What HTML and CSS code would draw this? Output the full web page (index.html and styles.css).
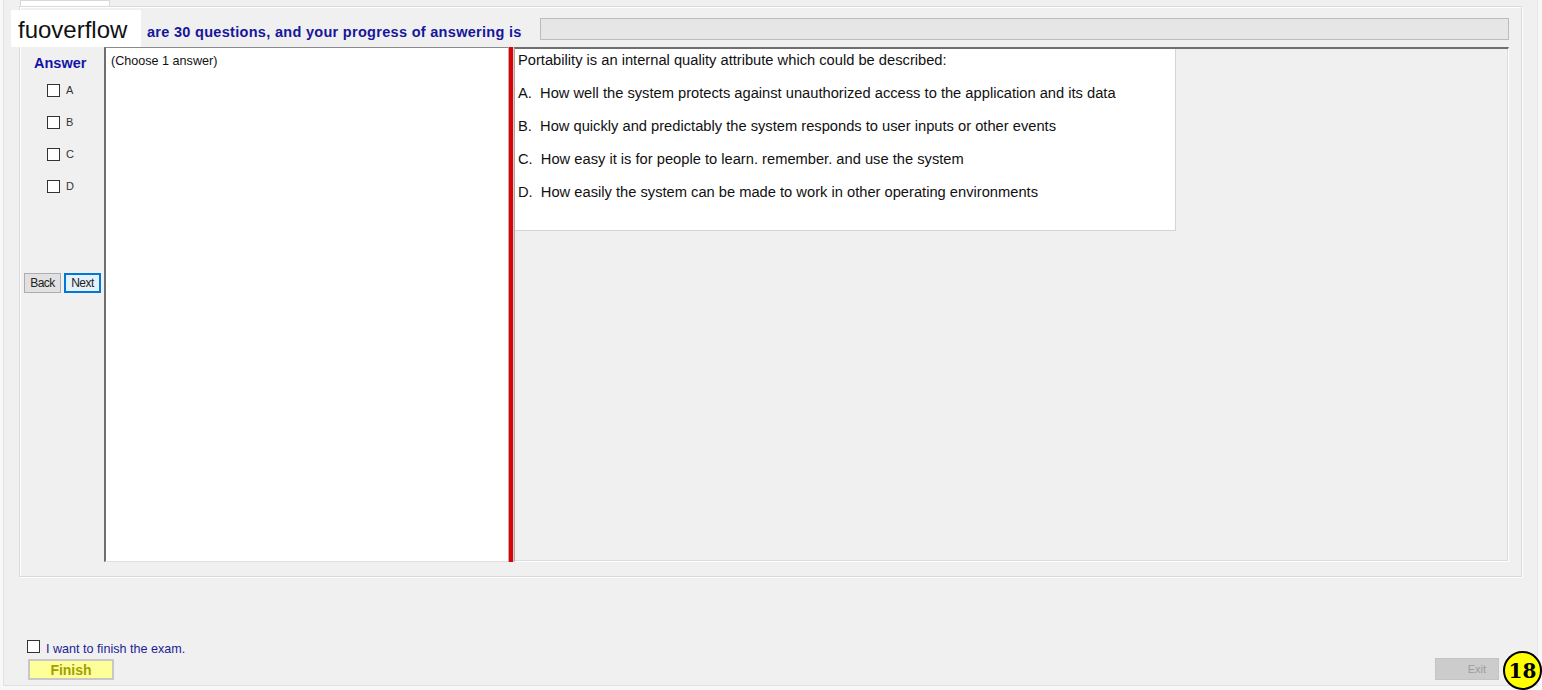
FILE: index.html
```html
<!DOCTYPE html>
<html>
<head>
<meta charset="utf-8">
<title>Exam</title>
<link rel="stylesheet" href="styles.css">
</head>
<body>
<div class="window">
  <div class="tabstrip"><div class="tab"></div></div>
  <div class="tabpage">
    <div class="header">
      <span class="progress-text">are 30 questions, and your progress of answering is</span>
      <div class="progress-bar"></div>
    </div>
    <div class="content">
      <div class="answers">
        <div class="answer-title">Answer</div>
        <div class="opts">
          <label class="opt"><span class="box"></span><span class="opt-label">A</span></label>
          <label class="opt"><span class="box"></span><span class="opt-label">B</span></label>
          <label class="opt"><span class="box"></span><span class="opt-label">C</span></label>
          <label class="opt"><span class="box"></span><span class="opt-label">D</span></label>
        </div>
        <div class="nav">
          <button class="btn">Back</button>
          <button class="btn btn-focus">Next</button>
        </div>
      </div>
      <div class="choices">(Choose 1 answer)</div>
      <div class="splitter"></div>
      <div class="question">
        <div class="qbox">
          <p class="qline">Portability is an internal quality attribute which could be described:</p>
          <p class="qline">A.&nbsp; How well the system protects against unauthorized access to the application and its data</p>
          <p class="qline">B.&nbsp; How quickly and predictably the system responds to user inputs or other events</p>
          <p class="qline">C.&nbsp; How easy it is for people to learn. remember. and use the system</p>
          <p class="qline">D.&nbsp; How easily the system can be made to work in other operating environments</p>
        </div>
      </div>
    </div>
  </div>
  <div class="footer">
    <div class="finish-col">
      <label class="finish-check"><span class="box"></span><span class="finish-label">I want to finish the exam.</span></label>
      <button class="finish-btn">Finish</button>
    </div>
    <button class="exit-btn">Exit</button>
  </div>
  <div class="watermark">fuoverflow</div>
  <div class="badge">18</div>
</div>
</body>
</html>
```

FILE: styles.css
```css
* { box-sizing: border-box; }
html, body { margin: 0; padding: 0; }
body {
  background: #f8f8f8;
  font-family: "Liberation Sans", Arial, sans-serif;
  width: 1542px;
  height: 690px;
  overflow: hidden;
}
.window {
  position: relative;
  margin-left: 3px;
  width: 1535px;
  height: 686px;
  background: #f0f0f0;
  border-left: 1px solid #e2e2e2;
  border-bottom: 1px solid #e2e2e2;
  border-right: 1px solid #e8e8e8;
  display: flex;
  flex-direction: column;
}
.tabstrip {
  height: 6px;
  padding-left: 16px;
}
.tab {
  width: 90px;
  height: 6px;
  background: #fff;
  border: 1px solid #d9d9d9;
  border-bottom: none;
}
.tabpage {
  margin-left: 15px;
  width: 1503px;
  height: 571px;
  border: 1px solid #dadada;
  box-shadow: inset 1px 1px 0 #fff, 1px 1px 0 #fff;
  padding: 0 12px 0 4px;
  display: flex;
  flex-direction: column;
}
.header {
  height: 40px;
  display: flex;
  align-items: center;
  padding-left: 123px;
}
.progress-text {
  color: #16169a;
  font-weight: bold;
  font-size: 14.5px;
  letter-spacing: 0.3px;
  margin-top: 10px;
}
.progress-bar {
  margin-left: auto;
  margin-top: 3px;
  width: 969px;
  height: 22px;
  background: #e6e6e6;
  border: 1px solid #bcbcbc;
}
.content {
  height: 515px;
  display: flex;
}
.answers {
  width: 80px;
  display: flex;
  flex-direction: column;
}
.answer-title {
  color: #1414a8;
  font-weight: bold;
  font-size: 14.5px;
  padding-left: 10px;
  margin-top: 8px;
  line-height: 16px;
}
.opts {
  display: flex;
  flex-direction: column;
  gap: 20px;
  padding-left: 23px;
  margin-top: 13px;
}
.opt {
  display: flex;
  align-items: center;
  height: 12px;
}
.box {
  display: inline-block;
  width: 13px;
  height: 13px;
  border: 1px solid #333;
  background: #fff;
  flex: none;
}
.opt-label {
  font-size: 11px;
  color: #333;
  margin-left: 6px;
  margin-top: -1px;
}
.nav {
  display: flex;
  gap: 3px;
  margin-top: 81px;
}
.btn {
  width: 37px;
  height: 20px;
  padding: 0;
  font-family: "Liberation Sans", Arial, sans-serif;
  font-size: 12px;
  letter-spacing: -0.5px;
  color: #222;
  background: #e1e1e1;
  border: 1px solid #adadad;
}
.btn-focus {
  border: 2px solid #0078d7;
  background: #e5f1fb;
}
.choices {
  width: 404px;
  background: #fff;
  border-left: 2px solid #6e6e6e;
  border-top: 1px solid #8a8a8a;
  border-bottom: 1px solid #e0e0e0;
  font-size: 12.6px;
  color: #111;
  padding: 6px 0 0 5px;
}
.splitter {
  width: 6px;
  background: #e00000;
  border-left: 1px solid #b0b0b0;
  border-right: 1px solid #cfcfcf;
}
.question {
  flex: 1;
  border-top: 2px solid #6e6e6e;
  border-left: 1px solid #a8a8a8;
  border-right: 1px solid #fff;
  border-bottom: 1px solid #fff;
  box-shadow: inset -1px -1px 0 #dcdcdc;
}
.qbox {
  width: 661px;
  height: 182px;
  background: #fff;
  border-right: 1px solid #d4d4d4;
  border-bottom: 1px solid #d4d4d4;
  padding: 1px 0 0 3px;
}
.qline {
  margin: 0 0 13px 0;
  font-size: 14.7px;
  line-height: 20px;
  color: #111;
  white-space: nowrap;
}
.footer {
  flex: 1;
  display: flex;
  justify-content: space-between;
  align-items: flex-end;
  padding: 0 38px 5px 23px;
}
.finish-col {
  display: flex;
  flex-direction: column;
}
.finish-check {
  display: flex;
  align-items: center;
}
.finish-label {
  color: #1c1c96;
  font-size: 12.6px;
  margin-left: 6px;
  margin-top: 5px;
}
.finish-btn {
  margin-top: 3px;
  margin-left: 1px;
  width: 86px;
  height: 21px;
  padding: 0;
  background: #ffff99;
  border: 2px solid #c8c8c8;
  color: #a0a000;
  font-family: "Liberation Sans", Arial, sans-serif;
  font-weight: bold;
  font-size: 14px;
}
.exit-btn {
  width: 64px;
  height: 22px;
  padding: 0 12px 0 0;
  text-align: right;
  background: #cccccc;
  border: 1px solid #c4c4c4;
  color: #9c9c9c;
  font-family: "Liberation Sans", Arial, sans-serif;
  font-size: 11px;
}
.watermark {
  position: absolute;
  left: 7px;
  top: 10px;
  width: 130px;
  height: 37px;
  background: #fff;
  font-size: 24px;
  color: #111;
  padding: 7px 0 0 7px;
  line-height: 26px;
}
.badge {
  position: absolute;
  left: 1499px;
  top: 651px;
  width: 39px;
  height: 39px;
  border-radius: 50%;
  background: #ffff00;
  border: 2px solid #000;
  font-family: "DejaVu Serif", "Liberation Serif", serif;
  font-weight: bold;
  font-size: 20px;
  display: flex;
  align-items: center;
  justify-content: center;
  color: #000;
}
```
